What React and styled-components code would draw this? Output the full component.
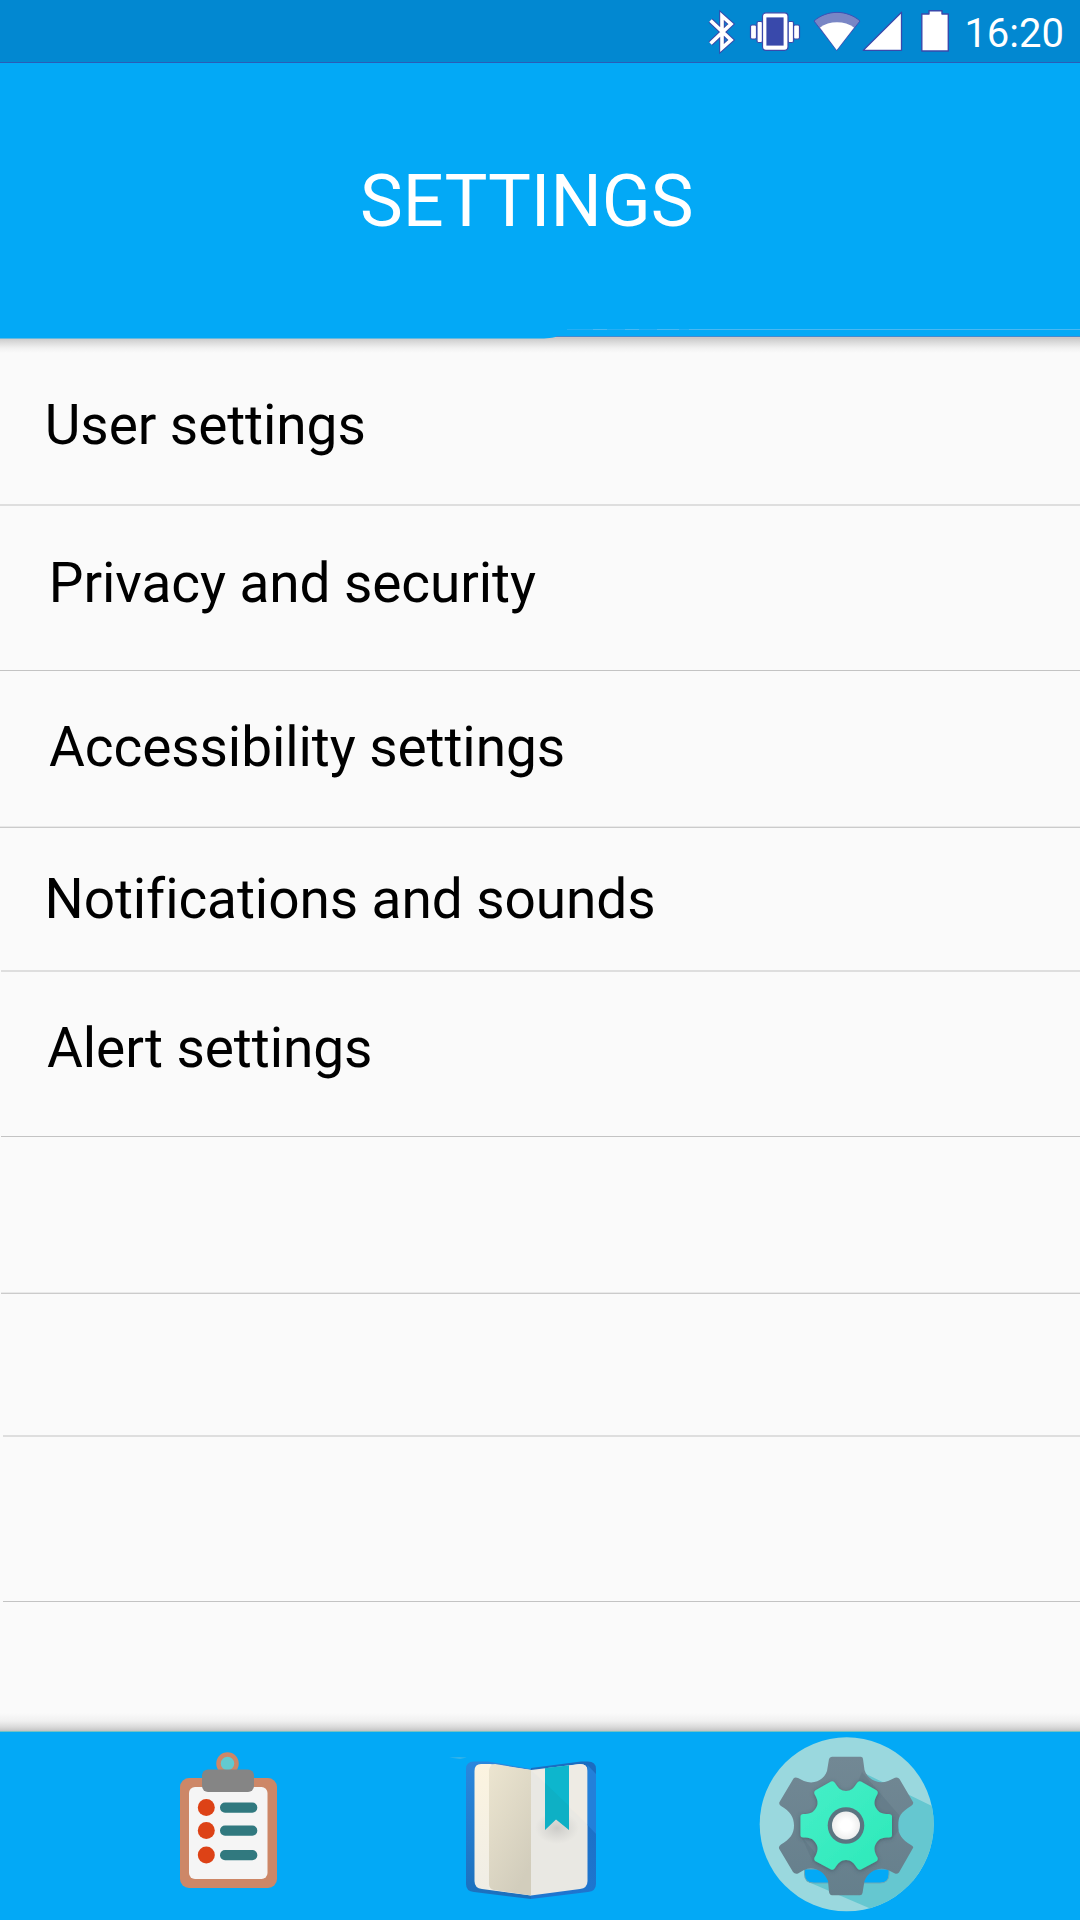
import React from "react";
import styled, { createGlobalStyle } from "styled-components";

const Global = createGlobalStyle`
  * { box-sizing: border-box; }
  body { margin: 0; background: #fafafa; }
`;

const Screen = styled.div`
  width: 1080px;
  height: 1920px;
  display: flex;
  flex-direction: column;
  overflow: hidden;
  background: #fafafa;
  font-family: Roboto, "Liberation Sans", sans-serif;
`;

const StatusBar = styled.div`
  height: 63px;
  flex: none;
  display: flex;
  justify-content: flex-end;
  background: #0288d1;
  border-bottom: 1px solid #2a5db8;
  padding-right: 16px;
`;

const StatusIcons = styled.svg`
  width: 260px;
  height: 62px;
  display: block;
`;

const Clock = styled.time`
  width: 100px;
  margin-left: 14px;
  line-height: 68px;
  font-size: 40px;
  color: #fff;
  white-space: nowrap;
  text-align: right;
`;

const Header = styled.header`
  height: 276px;
  flex: none;
  display: flex;
  flex-direction: column;
  background: #03a9f6;
`;

const Title = styled.h1`
  margin: 97px 0 0 360px;
  font-size: 72px;
  line-height: 84px;
  font-weight: 400;
  color: #fff;
`;

const HeaderEdge = styled.svg`
  display: block;
  width: 1080px;
  height: 15px;
  margin-top: auto;
`;

const List = styled.ul`
  flex: 1;
  margin: 0;
  padding: 0;
  list-style: none;
  display: flex;
  flex-direction: column;
  background: linear-gradient(#cdcdcd, #dedede 4px, #f1f1f1 9px, #fafafa 14px);
`;

const dividers = {
  even: "#dedede, #dedede",
  thin: "transparent 1px, #c3c3c3 1px",
  soft: "#e9e9e9 1px, #cbcbcb 1px",
};

const Row = styled.li`
  height: ${(p) => p.$h}px;
  flex: none;
  padding: ${(p) => p.$top || 0}px 0 0 ${(p) => p.$left || 0}px;
  background: linear-gradient(${(p) => dividers[p.$divider]}) right bottom /
    calc(100% - ${(p) => p.$inset || 0}px) 2px no-repeat;
  font-size: 55px;
  line-height: 64px;
  letter-spacing: -0.09px;
  color: #000;
  white-space: nowrap;
`;

const Tail = styled.li`
  flex: 1;
  background: linear-gradient(to top, #c4c4c4, #dadada 4px, #f0f0f0 10px, #fafafa 18px);
`;

const TabBar = styled.nav`
  height: 189px;
  flex: none;
  display: flex;
  background: #03a9f6;
  border-top: 1px solid #72c3c5;
`;

const Tab = styled.button`
  border: 0;
  padding: 0;
  background: none;
  width: ${(p) => p.$w}px;
  margin-left: ${(p) => p.$gap}px;
`;

const TabIcon = styled.svg`
  display: block;
  width: 100%;
  height: 188px;
`;

const rows = [
  { label: "User settings", h: 167, top: 54, left: 44.8, divider: "even" },
  { label: "Privacy and security", h: 165, top: 45, left: 48.8, divider: "thin" },
  { label: "Accessibility settings", h: 157, top: 44, left: 49, divider: "soft" },
  { label: "Notifications and sounds", h: 144, top: 39, left: 44.5, divider: "even", inset: 1 },
  { label: "Alert settings", h: 165, top: 44, left: 47, divider: "thin", inset: 1 },
  { h: 157, divider: "soft", inset: 1 },
  { h: 143, divider: "even", inset: 3 },
  { h: 165, divider: "thin", inset: 3 },
];

const Status = () => (
  <StatusIcons viewBox="690 0 260 62">
    <g fill="none" strokeLinejoin="miter">
      <path d="M710.500 20.500 L731 40 L722 48 V16 L731 24 L710.500 43.500" stroke="#3949ab" strokeWidth="5.600" />
      <path d="M710.500 20.500 L731 40 L722 48 V16 L731 24 L710.500 43.500" stroke="#fff" strokeWidth="3.600" />
    </g>
    <g fill="#fff" stroke="#3949ab" strokeWidth="1.200">
      <rect x="750.500" y="25" width="6" height="14" rx="1.500" />
      <rect x="757" y="21.500" width="5.500" height="21" rx="1.500" />
      <rect x="793.500" y="25" width="6" height="14" rx="1.500" />
      <rect x="788" y="21.500" width="5.500" height="21" rx="1.500" />
      <rect x="762.500" y="12.800" width="25.500" height="37.500" rx="3.500" />
      <rect x="767" y="18" width="16" height="27" fill="#3949ab" />
    </g>
    <path d="M814 21 C827 9.500 847 9.500 860 21 L836.700 50.500Z" fill="#7986c5" stroke="#3f51b5" strokeWidth="1" />
    <path d="M820 27.500 C829 20.500 845 20.500 854 27.500 L836.700 50Z" fill="#fff" />
    <path d="M863.300 50.300 L901.500 12.300 V50.300Z" fill="#fff" stroke="#3949ab" strokeWidth="1.300" strokeLinejoin="round" />
    <path d="M921.800 14 H929 V10.800 H942 V14 H948.300 V51 H921.800Z" fill="#fff" stroke="#3949ab" strokeWidth="1.400" strokeLinejoin="round" />
  </StatusIcons>
);

const Clipboard = () => (
  <TabIcon viewBox="160 1732 140 188">
    <circle cx="227.500" cy="1763.500" r="9" fill="#62cad0" stroke="#cd8767" strokeWidth="4.500" />
    <rect x="180" y="1778" width="97" height="110" rx="9" fill="#cd8767" />
    <rect x="189" y="1787" width="78.500" height="92" rx="6" fill="#f5f5f5" />
    <rect x="202" y="1769.500" width="52" height="22.500" rx="6" fill="#858585" />
    {[1807.5, 1830.5, 1855].map((y) => (
      <g key={y}>
        <circle cx="206.300" cy={y} r="8.500" fill="#dd4216" />
        <rect x="220" y={y - 5} width="37.300" height="10.300" rx="5" fill="#31797f" />
      </g>
    ))}
  </TabIcon>
);

const Book = () => (
  <TabIcon viewBox="440 1732 180 188">
    <defs>
      <linearGradient id="cover" x1="0" y1="0" x2="0" y2="1">
        <stop offset="0" stopColor="#2b87dd" />
        <stop offset="1" stopColor="#1b70bd" />
      </linearGradient>
      <linearGradient id="coverRight" x1="0" y1="0" x2="0" y2="1">
        <stop offset="0" stopColor="#1b6cc0" />
        <stop offset="1" stopColor="#1e76d0" />
      </linearGradient>
      <linearGradient id="page" x1="0" y1="0" x2="0" y2="1">
        <stop offset="0" stopColor="#fcf4e0" />
        <stop offset="1" stopColor="#efede6" />
      </linearGradient>
      <linearGradient id="pageLeft" x1="0" y1="0" x2="0.600" y2="1">
        <stop offset="0" stopColor="#ece5d0" />
        <stop offset="1" stopColor="#d2cdbc" />
      </linearGradient>
      <radialGradient id="ribbonShade">
        <stop offset="0" stopColor="#888" stopOpacity="0.300" />
        <stop offset="1" stopColor="#999" stopOpacity="0" />
      </radialGradient>
    </defs>
    <path d="M449 1757.500 Q459 1756.500 467 1757.500 L460 1759Z" fill="#48b8e4" opacity="0.700" />
    <path d="M474 1761.500 H488 L531 1769 V1899 L474 1892 Q466 1891.500 466 1884 V1769 Q466 1761.500 474 1761.500Z" fill="url(#cover)" />
    <path d="M531 1768 L581 1761.500 H588 Q596 1761.500 596 1769 V1884 Q596 1891 588 1892 L531 1899Z" fill="url(#coverRight)" />
    <path d="M481 1764 H490 L531 1770 V1895.500 L482 1889 Q474.500 1888 474.500 1881 V1771 Q474.500 1764 481 1764Z" fill="url(#page)" />
    <path d="M495 1764 L531 1770 V1895.500 L494 1890 Q489 1889 489 1884 V1770 Q490 1764 495 1764Z" fill="url(#pageLeft)" />
    <path d="M531 1770 L580 1764 Q587.500 1764 587.500 1771 V1881 Q587.500 1888 580 1889 L531 1895.500Z" fill="#e9e8e3" />
    <path d="M532 1771 L580 1764 Q587.500 1764 587.500 1771 V1825Z" fill="#eeebe4" />
    <path d="M587.500 1765 L596 1774 V1834 L587.500 1825Z" fill="#2380da" />
    <ellipse cx="557" cy="1828" rx="22" ry="16" fill="url(#ribbonShade)" />
    <path d="M545 1768.300 L569 1765.500 V1830 L556 1819.500 L545 1830Z" fill="#0eb0c5" />
    <path d="M545 1768.300 L569 1765.500 V1806 L545 1783Z" fill="#0db6cd" />
  </TabIcon>
);

const Gear = () => (
  <TabIcon viewBox="740 1732 220 188">
    <defs>
      <clipPath id="disc"><circle cx="846.700" cy="1824.300" r="87" /></clipPath>
      <linearGradient id="slate" x1="0" y1="0" x2="0" y2="1">
        <stop offset="0" stopColor="#728894" />
        <stop offset="1" stopColor="#657f8c" />
      </linearGradient>
      <linearGradient id="mint" x1="0" y1="0" x2="1" y2="1">
        <stop offset="0" stopColor="#46efc8" />
        <stop offset="1" stopColor="#2ce9b9" />
      </linearGradient>
      <radialGradient id="knob">
        <stop offset="0.400" stopColor="#fff" />
        <stop offset="1" stopColor="#eee" />
      </radialGradient>
      <filter id="soft" x="-20%" y="-20%" width="140%" height="140%">
        <feDropShadow dx="0" dy="1" stdDeviation="2" floodColor="#334955" floodOpacity="0.600" />
      </filter>
    </defs>
    <circle cx="846.700" cy="1824.300" r="87" fill="#9ad8de" />
    <path clipPath="url(#disc)" d="M866 1774 L940 1810 V1920 H880 L869 1908 L806 1881 L850 1830Z" fill="#65c7d0" />
    <path d="M804.500 1869 H889 V1874 Q889 1883 880 1883 H814 Q804.500 1883 804.500 1874Z" fill="#03a9f6" stroke="#6ba9b8" strokeWidth="1" />
    <path
      fill="url(#slate)"
      d="M832 1756.800 H861 Q863 1757 863 1759 L864.500 1770 C867 1779 878 1785 888 1781 L895 1777.800 Q898 1776.800 899.500 1779 L913 1802 Q914 1804 911 1806 C901 1812 898 1817 898 1825.500 C898 1834 902 1840 911 1845 Q914 1847 913 1848 L899 1872.500 Q897 1874.500 895 1873.500 L888 1870 C878 1866 868 1872 864.500 1881 L862.500 1893 Q862 1895.200 860 1895.200 H832 Q829.500 1895 829 1892 L828 1881 C824 1871 814 1866 804 1870 L798 1873.500 Q795 1874.500 793 1872 L779 1848.500 Q778.500 1846 781 1844.500 C790 1839 794 1834 794 1825.500 C794 1817 790 1811 781 1806 Q778.500 1804 779.500 1802 L793.500 1778.500 Q795 1777 798 1778 L804 1781 C814 1785 824 1780 827 1771 L829 1759 Q829.500 1757 832 1756.800Z"
    />
    <path d="M862 1772 L899 1815 V1830 L891 1840 L850 1800Z M801 1836 L818 1856 L813 1862Z" fill="#4d6470" opacity="0.220" />
    <path
      filter="url(#soft)"
      fill="url(#mint)"
      d="M831 1781.500 Q833.500 1780.500 835 1783 C838 1788 841 1791 846 1791 C851 1791 854 1788 857 1783 Q858.500 1780.500 861 1781.500 L876 1790 Q878.500 1791.500 877.500 1794 C874 1800 873.500 1804 876 1808 C878.500 1812.500 882 1814 888.500 1814 Q892 1814 892 1816.500 V1835 Q892 1837.500 889 1837.500 C882 1837.500 878.500 1839 876 1843.500 C873.500 1847 874 1852 877.500 1857.500 Q878.500 1860 876 1861.500 L861 1869.500 Q858.500 1870.500 857 1868 C854 1863 851 1860 846 1860 C841 1860 838 1863 835 1868 Q833.500 1870.500 831 1869.500 L816 1861.500 Q813.500 1860 814.500 1857.500 C818 1852 818.500 1847 816 1843.500 C813.500 1839 810 1837.500 803.500 1837.500 Q800.500 1837.500 800.500 1835 V1816.500 Q800.500 1814 803.500 1814 C810 1814 813.500 1812.500 816 1808 C818.500 1804 818 1800 814.500 1794 Q813.500 1791.500 816 1790Z"
    />
    <circle cx="846" cy="1825.500" r="18.300" fill="#5b7481" />
    <circle cx="846" cy="1825.500" r="14" fill="url(#knob)" />
  </TabIcon>
);

export default function App() {
  return (
    <Screen>
      <Global />
      <StatusBar>
        <Status />
        <Clock>16:20</Clock>
      </StatusBar>
      <Header>
        <Title>SETTINGS</Title>
        <HeaderEdge viewBox="0 324 1080 15">
          <rect x="0" y="337" width="1080" height="2" fill="#cbc8c7" />
          <path d="M0 324 H560 V336 Q552 338.400 544 338.400 H0Z" fill="#03a9f6" />
          <path d="M567 329.500 H689" stroke="#25aef4" />
          <path d="M593 329.500 H607 M625 329.500 H639 M657 329.500 H679 M689 329.500 H1080" stroke="#4ab8f2" />
          <path d="M556 336.500 H1080" stroke="#4389cf" />
        </HeaderEdge>
      </Header>
      <List>
        {rows.map((r, i) => (
          <Row key={i} $h={r.h} $top={r.top} $left={r.left} $divider={r.divider} $inset={r.inset}>
            {r.label}
          </Row>
        ))}
        <Tail />
      </List>
      <TabBar>
        <Tab $w={140} $gap={160} aria-label="Tasks"><Clipboard /></Tab>
        <Tab $w={180} $gap={140} aria-label="Journal"><Book /></Tab>
        <Tab $w={220} $gap={120} aria-label="Settings"><Gear /></Tab>
      </TabBar>
    </Screen>
  );
}
